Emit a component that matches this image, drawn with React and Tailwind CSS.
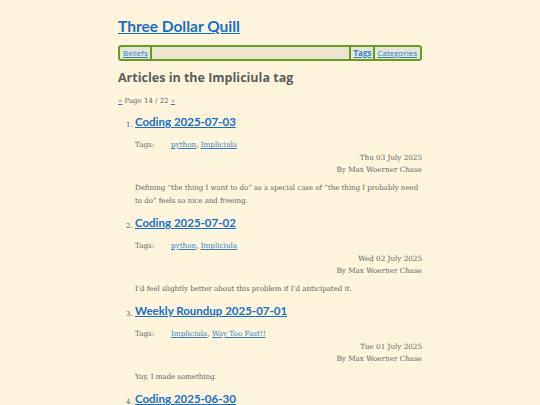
import React from "react";

const articles = [
  {
    title: "Coding 2025-07-03",
    tags: ["python", "Impliciula"],
    date: "Thu 03 July 2025",
    summary:
      "Defining \u201cthe thing I want to do\u201d as a special case of \u201cthe thing I probably need to do\u201d feels so nice and freeing.",
  },
  {
    title: "Coding 2025-07-02",
    tags: ["python", "Impliciula"],
    date: "Wed 02 July 2025",
    summary: "I\u2019d feel slightly better about this problem if I\u2019d anticipated it.",
  },
  {
    title: "Weekly Roundup 2025-07-01",
    tags: ["Impliciula", "Way Too Fast!!"],
    date: "Tue 01 July 2025",
    summary: "Yay, I made something.",
  },
  {
    title: "Coding 2025-06-30",
    tags: ["python", "Impliciula"],
    date: "Mon 30 June 2025",
    summary: "",
  },
];

const head = { fontFamily: '"Open Sans", "Noto Sans", sans-serif' };
const title = { fontFamily: 'Lato, "Open Sans", sans-serif' };
const body = { fontFamily: '"DejaVu Serif", "Liberation Serif", serif' };

export default function App() {
  return (
    <div className="min-h-[405px] bg-[#fcf4dc] text-[#555]">
      <div className="mx-auto w-[304px] pt-[14px]">
        <h1 style={title} className="text-[15.5px] font-bold leading-[24px]">
          <a href="#" className="text-[#1a6fc4] underline">Three Dollar Quill</a>
        </h1>

        {/* Nav */}
        <nav
          style={head}
          className="mt-[7px] flex h-[16px] items-center rounded-[3px] border-2 border-[#6b9a21] bg-[#ebe5cf] px-[1px] text-[8px] leading-none"
        >
          <a href="#" className="flex h-[12px] items-center bg-[#e3e6da] px-[2px] text-[#3a7fc0] underline">Beliefs</a>
          <span className="h-[12px] w-[2px] bg-[#6b9a21]" />
          <span className="flex-1" />
          <span className="h-[12px] w-[2px] bg-[#6b9a21]" />
          <a href="#" className="flex h-[12px] items-center bg-[#e3e6da] px-[2px] font-bold text-[#3a7fc0] underline">Tags</a>
          <span className="h-[12px] w-[2px] bg-[#6b9a21]" />
          <a href="#" className="flex h-[12px] items-center bg-[#e3e6da] px-[2px] text-[#3a7fc0] underline">Categories</a>
        </nav>

        <h2 style={head} className="mt-[8px] text-[12.5px] font-bold leading-[18px] text-[#5a5f5f]">
          Articles in the Impliciula tag
        </h2>

        <p style={body} className="mt-[9px] text-[7px] leading-[10px] text-[#666]">
          <a href="#" className="text-[#3a7fc0] underline">«</a> Page 14 / 22{" "}
          <a href="#" className="text-[#3a7fc0] underline">»</a>
        </p>

        <ol className="mt-[7px] pl-[17px]">
          {articles.map((a, i) => (
            <li key={a.title} className="flex">
              <span style={body} className="w-[7px] shrink-0 -ml-[9px] mr-[2px] pt-[7px] text-[7px] text-[#666]">
                {i + 1}.
              </span>
              <div className="flex-1">
                <h3 style={title} className="text-[11.5px] font-bold leading-[18px]">
                  <a href="#" className="text-[#1a6fc4] underline">{a.title}</a>
                </h3>
                <div style={body} className="mt-[8px] text-[7.2px] leading-[12px]">
                  <div className="flex">
                    <span className="w-[36px] text-[#666]">Tags:</span>
                    <span>
                      {a.tags.map((t, j) => (
                        <React.Fragment key={t}>
                          {j > 0 && ", "}
                          <a href="#" className="text-[#3a7fc0] underline">{t}</a>
                        </React.Fragment>
                      ))}
                    </span>
                  </div>
                  <div className="mt-[1px] text-right text-[#666]">{a.date}</div>
                  <div className="text-right text-[#666]">By Max Woerner Chase</div>
                </div>
                {a.summary && (
                  <p style={body} className="mt-[5px] mb-[7px] text-[7.1px] leading-[13px] tracking-[-0.05px] text-[#666]">
                    {a.summary}
                  </p>
                )}
              </div>
            </li>
          ))}
        </ol>
      </div>
    </div>
  );
}
